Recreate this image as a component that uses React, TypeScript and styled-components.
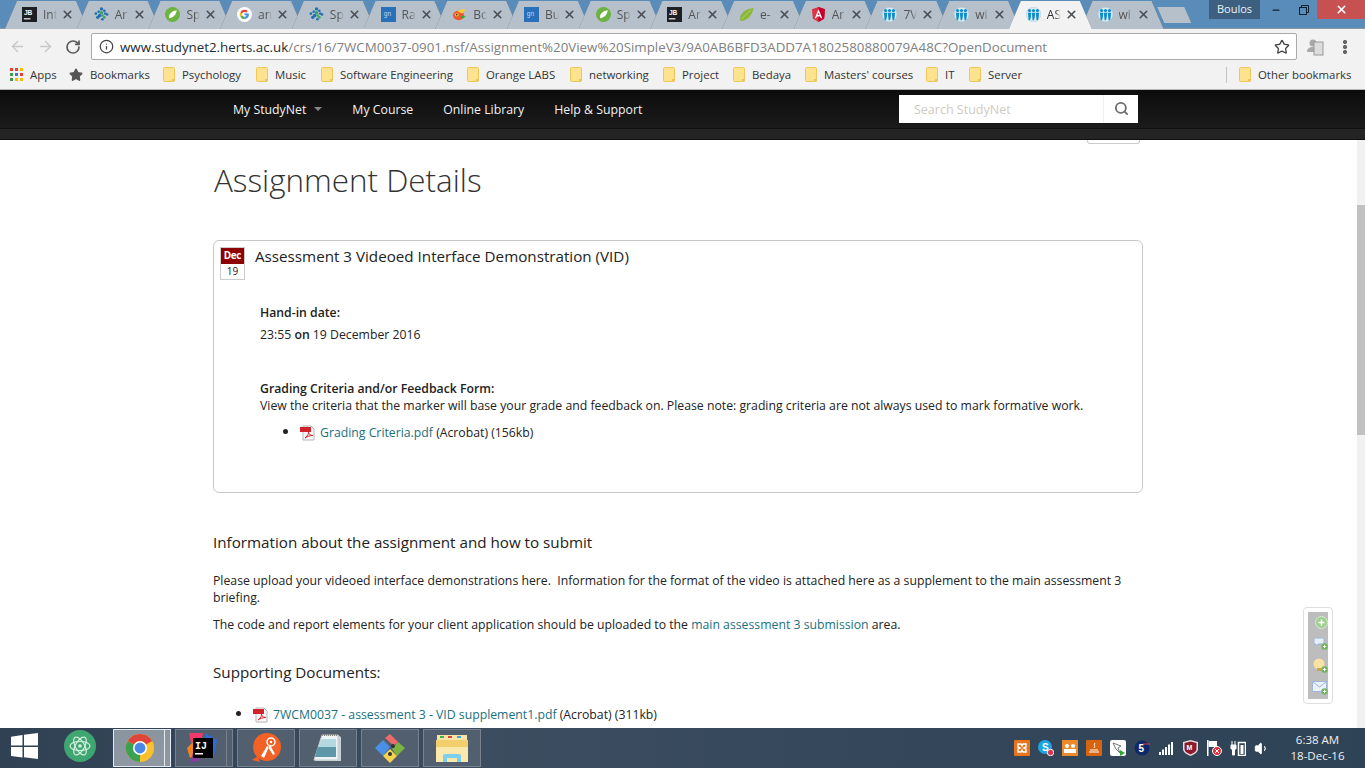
import React from 'react'
import styled, { createGlobalStyle } from 'styled-components'
import { ArrowLeft, ArrowRight, RotateCw, Info, Star, Search, X, Minus, Volume1 } from 'lucide-react'

const GlobalStyle = createGlobalStyle`
  html, body { margin: 0; padding: 0; height: 100%; overflow: hidden; background: #fff; }
  #root { height: 100%; }
  * { box-sizing: border-box; }
`

const Screen = styled.div`
  width: 1365px;
  height: 768px;
  display: flex;
  flex-direction: column;
  overflow: hidden;
  position: relative;
  font-family: 'Open Sans', 'Liberation Sans', sans-serif;
  color: #222;
`

/* ---------- browser chrome ---------- */

const TabStrip = styled.div`
  height: 29px;
  flex: none;
  background: #5a8cba;
  display: flex;
  align-items: flex-start;
  padding: 1px 0 0 5px;
  border-bottom: 1px solid #8b98a4;
`

const TabSlot = styled.div<{ $active?: boolean }>`
  width: 83px;
  height: 28px;
  flex: none;
  margin-right: -11.3px;
  position: relative;
  z-index: ${(p) => (p.$active ? 2 : 1)};
  filter: drop-shadow(0 0 0.6px #5d6670);
`

const TabFace = styled.div<{ $active?: boolean }>`
  width: 100%;
  height: 100%;
  background: ${(p) => (p.$active ? '#f2f2f2' : '#b5c0ca')};
  clip-path: polygon(0 100%, 12px 0, 71px 0, 83px 100%);
  display: flex;
  align-items: center;
  padding: 0 0 1px 17px;
`

const TabIcon = styled.svg`
  width: 15px;
  height: 15px;
  flex: none;
`

const TabTitle = styled.span<{ $active?: boolean }>`
  width: 14px;
  margin-left: 6px;
  overflow: hidden;
  white-space: nowrap;
  font-size: 12px;
  color: ${(p) => (p.$active ? '#333' : '#555')};
  -webkit-mask-image: linear-gradient(90deg, #000 60%, transparent);
  mask-image: linear-gradient(90deg, #000 60%, transparent);
`

const TabClose = styled(X)`
  width: 13px;
  height: 13px;
  margin-left: 4px;
  flex: none;
  color: #4a4f55;
`

const NewTab = styled.div`
  width: 34px;
  height: 16px;
  margin: 6px 0 0 5px;
  flex: none;
  background: #b5c0ca;
  clip-path: polygon(0 0, 27px 0, 34px 100%, 7px 100%);
`

const ProfileChip = styled.div`
  margin-left: auto;
  margin-top: -1px;
  width: 51px;
  height: 19px;
  background: #3d5f80;
  color: #eef2f5;
  font-size: 11px;
  text-align: center;
  line-height: 18px;
`

const WindowButton = styled.div<{ $close?: boolean; $wide?: number }>`
  width: ${(p) => p.$wide ?? 26}px;
  height: 19px;
  margin-top: -1px;
  display: flex;
  align-items: center;
  justify-content: center;
  color: ${(p) => (p.$close ? '#fff' : '#10202e')};
  background: ${(p) => (p.$close ? '#c75050' : 'transparent')};
`

const Toolbar = styled.div`
  height: 32px;
  flex: none;
  background: #f2f2f2;
  display: flex;
  align-items: center;
  padding: 3px 0 0 8px;
`

const NavButton = styled.div<{ $off?: boolean }>`
  width: 18px;
  height: 18px;
  margin-right: 10px;
  color: ${(p) => (p.$off ? '#c8c8c8' : '#5a5a5a')};
  display: flex;
  align-items: center;
  justify-content: center;
`

const Omnibox = styled.div`
  width: 1206px;
  height: 27px;
  margin-left: -1px;
  background: #fff;
  border: 1px solid #a9a9a9;
  border-radius: 2px;
  display: flex;
  align-items: center;
  padding: 0 6px 0 7px;
  font-size: 13.34px;
  white-space: nowrap;
`

const UrlHost = styled.span`
  margin-left: 6px;
  color: #1c2b33;
`

const UrlPath = styled.span`
  color: #808080;
`

const StarButton = styled(Star)`
  margin-left: auto;
  color: #444;
  flex: none;
`

const ExtensionIcon = styled.svg`
  width: 18px;
  height: 18px;
  margin-left: 9px;
  flex: none;
`

const MenuDots = styled.div`
  margin-left: 19px;
  width: 4px;
  height: 14px;
  background: radial-gradient(circle at 2px 2px, #666 2px, transparent 2.2px) 0 0 / 4px 5px repeat-y;
`

const BookmarkBar = styled.div`
  height: 29px;
  flex: none;
  background: #f2f2f2;
  border-bottom: 1px solid #b8b8b8;
  display: flex;
  align-items: center;
  padding: 0 0 1px 10px;
  font-size: 11.4px;
  color: #333;
`

const Bookmark = styled.div<{ $at: number }>`
  display: flex;
  align-items: center;
  gap: 7px;
  white-space: nowrap;
  flex: none;
  width: ${(p) => p.$at}px;
`

const BarDivider = styled.div`
  width: 1px;
  height: 16px;
  background: #c4c4c4;
  margin-right: 12px;
`

/* ---------- site header ---------- */

const SiteBar = styled.header`
  height: 50px;
  flex: none;
  background: #242424;
  border-bottom: 1px solid #111;
`

const SiteBarTop = styled.div`
  height: 39px;
  background: linear-gradient(#0c0c0c, #1b1b1b);
  display: flex;
  align-items: center;
  padding: 0 227px 0 233px;
  border-bottom: 1px solid #111;
`

const SiteLink = styled.a`
  color: #f2f2f2;
  font-size: 12.3px;
  font-weight: 500;
  margin-right: 30px;
  display: flex;
  align-items: center;
  white-space: nowrap;
`

const Caret = styled.span`
  width: 0;
  height: 0;
  margin-left: 8px;
  border-left: 4px solid transparent;
  border-right: 4px solid transparent;
  border-top: 4px solid #888;
`

const SearchBox = styled.div`
  margin-left: auto;
  margin-top: -1px;
  width: 239px;
  height: 28px;
  background: #fff;
  display: flex;
  align-items: center;
`

const SearchHint = styled.span`
  flex: 1;
  padding: 1px 0 0 15px;
  font-size: 12.5px;
  color: #cfcac5;
`

const SearchAddon = styled.div`
  width: 35px;
  height: 100%;
  border-left: 1px solid #f0f0f0;
  display: flex;
  align-items: center;
  justify-content: center;
  color: #6e6e6e;
`

/* ---------- page body ---------- */

const Viewport = styled.div`
  flex: 1;
  min-height: 0;
  display: flex;
  overflow: hidden;
  background: #fff;
`

const PageColumn = styled.main`
  flex: 1;
  min-width: 0;
  padding-left: 213px;
  position: relative;
  font-size: 12.25px;
  line-height: 17px;
`

const HangingTab = styled.div`
  position: absolute;
  top: 0;
  left: 1087px;
  width: 53px;
  height: 4px;
  border: 1px solid #ccc;
  border-top: none;
  border-radius: 0 0 3px 3px;
`

const PageTitle = styled.h1`
  margin: 0;
  padding-top: 18px;
  height: 100px;
  font-size: 31.4px;
  line-height: 44px;
  font-weight: 300;
  color: #333;
  padding-left: 1px;
`

const AssignmentCard = styled.section`
  width: 930px;
  height: 253px;
  border: 1px solid #c8c8c8;
  border-radius: 6px;
  padding: 6px 6px 0;
`

const CardHeader = styled.div`
  display: flex;
  align-items: flex-start;
  gap: 10px;
`

const DateBadge = styled.div`
  width: 25px;
  height: 33px;
  border: 1px solid #ccc;
  font-size: 10px;
  text-align: center;
  flex: none;
`

const BadgeMonth = styled.div`
  background: #8f0000;
  color: #fff;
  font-weight: 700;
  height: 16px;
  line-height: 15px;
  letter-spacing: -0.4px;
`

const BadgeDay = styled.div`
  line-height: 15px;
`

const CardTitle = styled.h2`
  margin: -1px 0 0;
  font-size: 15.2px;
  line-height: 20px;
  font-weight: 400;
`

const CardBody = styled.div`
  padding: 24px 0 0 40px;
`

const Strong = styled.div`
  font-weight: 600;
`

const DateLine = styled.div`
  margin-top: 5px;
  margin-bottom: 37px;
`

const Bold = styled.b`
  font-weight: 600;
`

const DocList = styled.ul<{ $gap: number }>`
  list-style: disc;
  margin: ${(p) => p.$gap}px 0 0;
  padding-left: 40px;

  li::marker {
    font-size: 14px;
  }
`

const DocLink = styled.a`
  color: #1a7080;
`

const PdfGlyph = styled.svg`
  width: 16px;
  height: 16px;
  vertical-align: -4px;
  margin-right: 4px;
`

const SectionTitle = styled.h3<{ $gap: number }>`
  margin: ${(p) => p.$gap}px 0 0;
  font-size: 15.2px;
  line-height: 20px;
  font-weight: 400;
`

const Paragraph = styled.p<{ $gap: number }>`
  margin: ${(p) => p.$gap}px 0 0;
  width: 930px;
`

const Scrollbar = styled.div`
  width: 8px;
  flex: none;
  background: #f1f1f1;
  padding-top: 65px;
`

const ScrollThumb = styled.div`
  height: 230px;
  background: #c1c1c1;
`

const FeedbackWidget = styled.div`
  position: absolute;
  top: 467px;
  left: 1303px;
  width: 30px;
  height: 97px;
  padding: 4px;
  background: #fff;
  border: 1px solid #ddd;
  border-radius: 4px;
`

const WidgetInner = styled.div`
  width: 100%;
  height: 100%;
  background: #bdbdbd;
  display: flex;
  flex-direction: column;
  align-items: flex-end;
  justify-content: space-around;
`

/* ---------- taskbar ---------- */

const Taskbar = styled.footer`
  height: 40px;
  flex: none;
  background: linear-gradient(90deg, #2f4153, #3c4d60 35%, #33465a 70%, #2f4357);
  display: flex;
  align-items: center;
  color: #fff;
`

const StartButton = styled.div`
  width: 64px;
  padding-left: 11px;
  flex: none;
`

const PinnedApp = styled.div`
  width: 49px;
  flex: none;
`

const TaskButton = styled.div<{ $active?: boolean; $w: number; $gap: number; $stack?: boolean }>`
  width: ${(p) => p.$w}px;
  height: 38px;
  margin-left: ${(p) => p.$gap}px;
  flex: none;
  position: relative;
  display: flex;
  align-items: center;
  justify-content: center;
  background: ${(p) => (p.$active ? 'linear-gradient(#8a95a0, #8f98a2)' : '#515f6f')};
  border: 1px solid ${(p) => (p.$active ? '#e6eaee' : '#76828f')};

  ${(p) =>
    p.$stack &&
    `&::after {
      content: '';
      position: absolute;
      top: -1px;
      bottom: -1px;
      right: -6px;
      width: 5px;
      border: 1px solid ${p.$active ? '#e6eaee' : '#76828f'};
      background: inherit;
    }`}
`

const TrayGroup = styled.div`
  margin-left: auto;
  display: flex;
  align-items: center;
  gap: 8px;
`

const TraySlot = styled.div`
  width: 16px;
  height: 16px;
  display: flex;
  align-items: center;
  justify-content: center;
`

const Clock = styled.div`
  width: 95px;
  flex: none;
  text-align: center;
  font-size: 11.5px;
  line-height: 16px;
  color: #eef1f4;
`

/* ---------- drawings ---------- */

const Favicon = ({ kind }: { kind: string }) => {
  switch (kind) {
    case 'jb':
      return (
        <TabIcon viewBox="0 0 16 16">
          <rect width="16" height="16" fill="#1c1f24" />
          <text x="2" y="8" fontSize="7" fontWeight="700" fill="#fff" fontFamily="'Liberation Sans', sans-serif">JB</text>
          <rect x="2" y="12" width="7" height="1.2" fill="#fff" />
        </TabIcon>
      )
    case 'dots':
      return (
        <TabIcon viewBox="0 0 16 16">
          {[[8, 2], [11, 4], [5, 5], [8, 6], [2, 7], [12, 7], [6, 9], [9, 9], [14, 8], [4, 11], [9, 13], [11, 11]].map(([x, y], i) => (
            <circle key={i} cx={x} cy={y} r={i % 3 === 0 ? 1.8 : 1.4} fill={i % 4 === 3 ? '#3da35d' : '#1f6fb5'} />
          ))}
        </TabIcon>
      )
    case 'spring':
      return (
        <TabIcon viewBox="0 0 16 16">
          <circle cx="8" cy="8" r="8" fill="#6db33f" />
          <path d="M12.5 3.500C12 8 9 11.500 4.500 12 3.500 8 6.500 4.500 12.500 3.500Z" fill="#fff" />
        </TabIcon>
      )
    case 'google':
      return (
        <TabIcon viewBox="0 0 16 16">
          <circle cx="8" cy="8" r="8" fill="#fff" />
          <path d="M12.5 6.800H8v2h2.500a2.700 2.700 0 0 1-2.500 1.700V13a5 5 0 0 0 4.500-6.200Z" fill="#4285f4" />
          <path d="M8 10.500A2.600 2.600 0 0 1 5.500 9L3.600 10.500A5 5 0 0 0 8 13Z" fill="#34a853" />
          <path d="M5.500 9a2.600 2.600 0 0 1 0-2L3.600 5.500a5 5 0 0 0 0 5Z" fill="#fbbc05" />
          <path d="M5.500 7A2.600 2.600 0 0 1 9.700 6L11.500 4.300A5 5 0 0 0 3.600 5.500Z" fill="#ea4335" />
        </TabIcon>
      )
    case 'gn':
      return (
        <TabIcon viewBox="0 0 16 16">
          <rect width="16" height="16" fill="#2a70b8" />
          <text x="3" y="10" fontSize="7" fill="#b9d4ee" fontFamily="'Liberation Sans', sans-serif">gn</text>
        </TabIcon>
      )
    case 'bower':
      return (
        <TabIcon viewBox="0 0 16 16">
          <ellipse cx="7" cy="9" rx="6" ry="5" fill="#ef5734" />
          <path d="M6 5c3-3 6-3 9-2-2 1-3 2-4 4Z" fill="#ffcc2f" />
          <path d="M9 9l6 1-5 3Z" fill="#2baf2b" />
          <circle cx="5" cy="8" r="2" fill="#ffcc2f" />
          <circle cx="5" cy="8" r="1" fill="#543729" />
        </TabIcon>
      )
    case 'leaf':
      return (
        <TabIcon viewBox="0 0 16 16">
          <path d="M15.500 1C14 9 9 14.500 1.500 15 -.5 8 6 2 15.500 1Z" fill="#8ab63a" />
          <path d="M3 13C6 9 9 6 13 3.500" stroke="#b7d66c" fill="none" />
        </TabIcon>
      )
    case 'angular':
      return (
        <TabIcon viewBox="0 0 16 16">
          <path d="M8 0 1 2.500l1 10L8 16l6-3.500 1-10Z" fill="#dd3345" />
          <path d="M8 0v16l6-3.500 1-10Z" fill="#c3002f" />
          <path d="M8 2.500 4 12h1.500l.8-2h3.400l.8 2H12ZM7 8.600l1-2.500 1 2.500Z" fill="#fff" />
        </TabIcon>
      )
    default:
      return (
        <TabIcon viewBox="0 0 16 16">
          <circle cx="8" cy="8" r="7.800" fill="#d9eef8" stroke="#a5c8d9" strokeWidth=".5" />
          {[3.800, 8, 12.200].map((x) => (
            <g key={x} fill="#128ccc">
              <circle cx={x} cy="3.800" r="1.700" />
              <path d={`M${x - 1.800} 6h3.600l-.5 5-.8 3h-1.500l-.3-3Z`} />
            </g>
          ))}
        </TabIcon>
      )
  }
}

const FolderIcon = () => (
  <svg width="12" height="16" viewBox="0 0 12 16">
    <rect x=".5" y=".5" width="11" height="14" rx="1" fill="#fde28f" stroke="#eec75a" />
    <rect x="9" y="12" width="2.500" height="2.500" fill="#eec75a" />
  </svg>
)

const AppsGrid = () => (
  <svg width="13" height="13" viewBox="0 0 13 13">
    {['#e34133', '#e34133', '#f9b900', '#3c9a4f', '#3b78e7', '#e34133', '#3c9a4f', '#f9b900', '#f9b900'].map((c, i) => (
      <rect key={i} x={(i % 3) * 5} y={Math.floor(i / 3) * 5} width="3" height="3" fill={c} />
    ))}
  </svg>
)

const PdfIcon = () => (
  <PdfGlyph viewBox="0 0 16 16">
    <path d="M3 1h8l3 3v11H3Z" fill="#fafafa" stroke="#b5b5b5" />
    <rect x="0" y="2" width="11" height="5" fill="#d2232a" />
    <path d="M5 13c3-2 4-5 3.500-7.500C8 8 9 10 13 10.500 10 10.500 7 11.500 5 13Z" fill="none" stroke="#d2232a" strokeWidth="1" />
  </PdfGlyph>
)

const ChromeLogo = () => (
  <svg width="30" height="30" viewBox="0 0 32 32">
    <circle cx="16" cy="16" r="15" fill="#fbc02d" />
    <path d="M16 16 3 8.500A15 15 0 0 0 16 31Z" fill="#3ba150" />
    <path d="M16 16 29 8.500A15 15 0 0 0 3 8.500Z" fill="#e0453a" />
    <circle cx="16" cy="16" r="7.500" fill="#fff" />
    <circle cx="16" cy="16" r="5.800" fill="#4a88e8" />
  </svg>
)

const AtomLogo = () => (
  <svg width="32" height="32" viewBox="0 0 32 32">
    <circle cx="16" cy="16" r="16" fill="#3fa672" />
    <g fill="none" stroke="#d6efe0" strokeWidth="1.200">
      <ellipse cx="16" cy="16" rx="10" ry="4.500" />
      <ellipse cx="16" cy="16" rx="10" ry="4.500" transform="rotate(60 16 16)" />
      <ellipse cx="16" cy="16" rx="10" ry="4.500" transform="rotate(120 16 16)" />
    </g>
    <circle cx="16" cy="16" r="1.800" fill="#d6efe0" />
  </svg>
)

const IntelliJLogo = () => (
  <svg width="30" height="32" viewBox="0 0 30 32">
    <path d="M2 1h14l-2 10H4Z" fill="#f0386b" />
    <path d="M18 1l12 7-3 17-8-4Z" fill="#2f6bdc" />
    <path d="M0 16l6-6 4 12-7 4Z" fill="#f58220" />
    <path d="M3 31l3-10 8 7Z" fill="#8a3fa0" />
    <rect x="6" y="6" width="20" height="20" fill="#000" />
    <text x="8" y="17" fontSize="10" fontWeight="700" fill="#fff" fontFamily="'Liberation Mono', monospace">IJ</text>
    <rect x="8" y="21" width="8" height="1.500" fill="#fff" />
  </svg>
)

const PostmanLogo = () => (
  <svg width="30" height="32" viewBox="0 0 30 32">
    <circle cx="16" cy="15" r="14" fill="#f26125" />
    <path d="M1 28l6-4 2 6Z" fill="#f26125" />
    <path d="M10 24l6-10 2 1-5 11Z M17 15l5 8 2-1-5-9Z" fill="#fff" />
    <circle cx="20" cy="10" r="4" fill="none" stroke="#fff" strokeWidth="1.500" />
    <circle cx="20" cy="10" r="1.200" fill="#fff" />
  </svg>
)

const NotepadLogo = () => (
  <svg width="32" height="30" viewBox="0 0 32 30">
    <path d="M10 2h16v25H2Z" fill="#eef3f4" stroke="#c4ccd0" />
    <path d="M10 6h14v8H6Z" fill="#b4d8df" />
    <path d="M5.500 14H24v10H3Z" fill="#5e97a8" />
    <path d="M10 2h16" stroke="#888" strokeDasharray="1 1" strokeWidth="2" />
    <path d="M26 2l3 2v24H4l-2-1h24Z" fill="#c8d0d4" />
  </svg>
)

const GitLogo = () => (
  <svg width="32" height="32" viewBox="0 0 32 32">
    <path d="M1 16l8-8 7 7-7 9Z" fill="#4a90e8" />
    <path d="M11 6l5-4 8 8-4 4Z" fill="#ee6a6a" />
    <path d="M18 17l6-7 7 6-8 8Z" fill="#7cb342" />
    <path d="M9 24l7-7 7 7-7 7Z" fill="#f5d34f" />
    <circle cx="19" cy="14" r="2" fill="#333" />
    <circle cx="16" cy="22" r="2" fill="#333" />
  </svg>
)

const ExplorerLogo = () => (
  <svg width="32" height="30" viewBox="0 0 32 30">
    <rect x="1" y="2" width="30" height="6" fill="#f7e5a8" />
    <rect x="4" y="3" width="4" height="2" fill="#47b04b" />
    <rect x="12" y="3" width="4" height="2" fill="#d8453a" />
    <rect x="21" y="3" width="4" height="2" fill="#4f9be0" />
    <path d="M0 7h32v22H0Z" fill="#f3cf6b" />
    <path d="M0 14h32v15H0Z" fill="#fbe9ac" />
    <path d="M7 29v-6a2 2 0 0 1 2-2h14a2 2 0 0 1 2 2v6h-4v-4H11v4Z" fill="#7cd0ee" />
  </svg>
)

const WindowsLogo = () => (
  <svg width="27" height="26" viewBox="0 0 27 26">
    <path d="M0 3.700 11.500 2v10.500H0ZM13 1.800 27 0v12.500H13ZM0 14h11.500v10.500L0 23ZM13 14h14v12l-14-1.800Z" fill="#fff" />
  </svg>
)

const TrayIcon = ({ i }: { i: number }) => {
  switch (i) {
    case 0:
      return (
        <svg width="16" height="16" viewBox="0 0 16 16">
          <rect width="16" height="16" rx="1" fill="#e8741d" />
          <path d="M4 4h3l1 2 1-2h3v3l-2 1 2 1v3H9L8 10l-1 2H4V9l2-1-2-1Z" fill="none" stroke="#fff" strokeWidth="1.400" />
        </svg>
      )
    case 1:
      return (
        <svg width="16" height="16" viewBox="0 0 16 16">
          <circle cx="7" cy="7" r="7" fill="#1da5e0" />
          <text x="4" y="11" fontSize="10" fontWeight="700" fill="#fff" fontFamily="'Liberation Sans', sans-serif">S</text>
          <circle cx="12.500" cy="12.500" r="3.200" fill="#d8334a" stroke="#fff" />
        </svg>
      )
    case 2:
      return (
        <svg width="16" height="16" viewBox="0 0 16 16">
          <rect width="16" height="16" fill="#ec8a2e" />
          <circle cx="5" cy="6" r="2" fill="#fff" />
          <circle cx="11" cy="6" r="2" fill="#fff" />
          <rect x="2" y="9" width="12" height="4" fill="#fff" />
        </svg>
      )
    case 3:
      return (
        <svg width="16" height="16" viewBox="0 0 16 16">
          <rect width="16" height="16" rx="1" fill="#d9640f" />
          <path d="M3 12h10M4 10h8M9 3c-2 2 1 3-1 5" stroke="#fff" fill="none" />
        </svg>
      )
    case 4:
      return (
        <svg width="16" height="16" viewBox="0 0 16 16">
          <rect width="16" height="16" rx="2" fill="#fff" />
          <path d="M3 3l8 3-3 2 2 5-4-4Z" fill="none" stroke="#777" />
          <path d="M10 10l5 3-5 3Z" fill="#2fa52f" />
        </svg>
      )
    case 5:
      return (
        <svg width="16" height="16" viewBox="0 0 16 16">
          <circle cx="8" cy="8" r="7.500" fill="#10286a" />
          <text x="4.500" y="12" fontSize="10" fontWeight="700" fill="#fff" fontFamily="'Liberation Sans', sans-serif">5</text>
          <path d="M9 4h7" stroke="#e23b3b" />
        </svg>
      )
    case 6:
      return (
        <svg width="15" height="14" viewBox="0 0 15 14">
          {[0, 1, 2, 3, 4].map((n) => (
            <rect key={n} x={n * 3} y={11 - n * 2.500} width="2" height={3 + n * 2.500} fill="#fff" />
          ))}
        </svg>
      )
    case 7:
      return (
        <svg width="15" height="16" viewBox="0 0 15 16">
          <path d="M7.500 0 15 2v7c0 3-3 5-7.500 7C3 14 0 12 0 9V2Z" fill="#e8dfdf" />
          <path d="M7.500 1.500 13.500 3v6c0 2.500-2.500 4-6 5.500-3.500-1.500-6-3-6-5.500V3Z" fill="#8a1c2e" />
          <text x="3.500" y="10" fontSize="7" fontWeight="700" fill="#fff" fontFamily="'Liberation Sans', sans-serif">M</text>
        </svg>
      )
    case 8:
      return (
        <svg width="16" height="16" viewBox="0 0 16 16">
          <rect x="1" y="0" width="1.500" height="16" fill="#fff" />
          <path d="M2.500 1H11v6H2.500Z" fill="#fff" />
          <circle cx="11" cy="11" r="4.500" fill="#e0333f" stroke="#fff" />
          <path d="M9 9l4 4M13 9l-4 4" stroke="#fff" />
        </svg>
      )
    case 9:
      return (
        <svg width="16" height="16" viewBox="0 0 16 16">
          <path d="M1 5h5v4H4.500v6h-2V9H1ZM2 1v4M5 1v4" stroke="#fff" fill="#fff" />
          <rect x="8.500" y="2.500" width="7" height="13" fill="none" stroke="#fff" strokeWidth="1.500" />
          <rect x="10.500" y="5" width="3" height="9" fill="#fff" />
        </svg>
      )
    default:
      return <Volume1 size={17} fill="#fff" strokeWidth={1.500} />
  }
}

const tabs = [
  ['jb', 'Int'], ['dots', 'Ar'], ['spring', 'Sp'], ['google', 'an'], ['dots', 'Sp'], ['gn', 'Ra'],
  ['bower', 'Bo'], ['gn', 'Bu'], ['spring', 'Sp'], ['jb', 'Ar'], ['leaf', 'e-'], ['angular', 'Ar'],
  ['herts', '7V'], ['herts', 'wi'], ['herts', 'AS'], ['herts', 'wi'],
]

const bookmarks: [string, number][] = [
  ['Psychology', 93], ['Music', 65], ['Software Engineering', 146], ['Orange LABS', 103],
  ['networking', 93], ['Project', 70], ['Bedaya', 72], ['Masters\u0027 courses', 121], ['IT', 43], ['Server', 257],
]

export default function App() {
  return (
    <Screen>
      <GlobalStyle />
      <TabStrip>
        {tabs.map(([icon, title], i) => (
          <TabSlot key={i} $active={i === 14}>
            <TabFace $active={i === 14}>
              <Favicon kind={icon} />
              <TabTitle $active={i === 14}>{title}</TabTitle>
              <TabClose strokeWidth={3} />
            </TabFace>
          </TabSlot>
        ))}
        <NewTab />
        <ProfileChip>Boulos</ProfileChip>
        <WindowButton $wide={31}><Minus size={10} strokeWidth={3} /></WindowButton>
        <WindowButton $wide={26}>
          <svg width="10" height="10" viewBox="0 0 10 10" fill="none" stroke="#10202e">
            <rect x=".5" y="2.500" width="7" height="7" />
            <path d="M2.500 2.500v-2h7v7h-2" />
          </svg>
        </WindowButton>
        <WindowButton $close $wide={48}><X size={13} strokeWidth={3} /></WindowButton>
      </TabStrip>

      <Toolbar>
        <NavButton $off><ArrowLeft size={17} /></NavButton>
        <NavButton $off><ArrowRight size={17} /></NavButton>
        <NavButton><RotateCw size={16} strokeWidth={2.500} /></NavButton>
        <Omnibox>
          <Info size={15} color="#444" />
          <UrlHost>www.studynet2.herts.ac.uk</UrlHost>
          <UrlPath>/crs/16/7WCM0037-0901.nsf/Assignment%20View%20SimpleV3/9A0AB6BFD3ADD7A1802580880079A48C?OpenDocument</UrlPath>
          <StarButton size={16} />
        </Omnibox>
        <ExtensionIcon viewBox="0 0 18 18">
          <circle cx="7" cy="5" r="3.500" fill="#a8a8a8" />
          <path d="M1 14c0-4 3-5 6-5s5 1 5 3v2Z" fill="#a8a8a8" />
          <rect x="8" y="4" width="9" height="13" fill="#ddd" stroke="#999" />
        </ExtensionIcon>
        <MenuDots />
      </Toolbar>

      <BookmarkBar>
        <Bookmark $at={59}><AppsGrid />Apps</Bookmark>
        <Bookmark $at={94}><Star size={14} fill="#555" color="#555" />Bookmarks</Bookmark>
        {bookmarks.map(([label, w]) => (
          <Bookmark key={label} $at={w}><FolderIcon />{label}</Bookmark>
        ))}
        <BarDivider />
        <Bookmark $at={120}><FolderIcon />Other bookmarks</Bookmark>
      </BookmarkBar>

      <SiteBar>
        <SiteBarTop>
          <SiteLink>My StudyNet<Caret /></SiteLink>
          <SiteLink>My Course</SiteLink>
          <SiteLink>Online Library</SiteLink>
          <SiteLink>Help &amp; Support</SiteLink>
          <SearchBox>
            <SearchHint>Search StudyNet</SearchHint>
            <SearchAddon><Search size={15} strokeWidth={3} /></SearchAddon>
          </SearchBox>
        </SiteBarTop>
      </SiteBar>

      <Viewport>
        <PageColumn>
          <HangingTab />
          <PageTitle>Assignment Details</PageTitle>
          <AssignmentCard>
            <CardHeader>
              <DateBadge>
                <BadgeMonth>Dec</BadgeMonth>
                <BadgeDay>19</BadgeDay>
              </DateBadge>
              <CardTitle>Assessment 3 Videoed Interface Demonstration (VID)</CardTitle>
            </CardHeader>
            <CardBody>
              <Strong>Hand-in date:</Strong>
              <DateLine>23:55 <Bold>on</Bold> 19 December 2016</DateLine>
              <Strong>Grading Criteria and/or Feedback Form:</Strong>
              <div>View the criteria that the marker will base your grade and feedback on. Please note: grading criteria are not always used to mark formative work.</div>
              <DocList $gap={9}>
                <li><PdfIcon /><DocLink>Grading Criteria.pdf</DocLink> (Acrobat) (156kb)</li>
              </DocList>
            </CardBody>
          </AssignmentCard>
          <SectionTitle $gap={39}>Information about the assignment and how to submit</SectionTitle>
          <Paragraph $gap={20}>Please upload your videoed interface demonstrations here.&nbsp; Information for the format of the video is attached here as a supplement to the main assessment 3 briefing.</Paragraph>
          <Paragraph $gap={10}>The code and report elements for your client application should be uploaded to the <DocLink>main assessment 3 submission</DocLink> area.</Paragraph>
          <SectionTitle $gap={29}>Supporting Documents:</SectionTitle>
          <DocList $gap={23}>
            <li><PdfIcon /><DocLink>7WCM0037 - assessment 3 - VID supplement1.pdf</DocLink> (Acrobat) (311kb)</li>
          </DocList>
          <FeedbackWidget>
            <WidgetInner>
              <svg width="13" height="13" viewBox="0 0 13 13">
                <circle cx="6.500" cy="6.500" r="6" fill="#9fd08f" stroke="#d8ecd0" />
                <path d="M6.500 3.500v6M3.500 6.500h6" stroke="#fff" strokeWidth="1.500" />
              </svg>
              <svg width="15" height="13" viewBox="0 0 15 13">
                <path d="M1 1h10v6H5L3 9V7H1Z" fill="#e4effa" stroke="#9db8d8" />
                <circle cx="11.500" cy="9.500" r="3.200" fill="#6fb35c" />
                <path d="M11.500 7.800v3.400M9.800 9.500h3.400" stroke="#fff" />
              </svg>
              <svg width="15" height="15" viewBox="0 0 15 15">
                <circle cx="6" cy="6" r="5.500" fill="#f9e3a2" />
                <rect x="4" y="10" width="4" height="3" fill="#c9a74f" />
                <circle cx="11.500" cy="11.500" r="3.200" fill="#6fb35c" />
                <path d="M11.500 9.800v3.400M9.800 11.500h3.400" stroke="#fff" />
              </svg>
              <svg width="16" height="14" viewBox="0 0 16 14">
                <rect x=".5" y=".5" width="14" height="10" fill="#eaf1fb" stroke="#9db8d8" />
                <path d="M1 1l6.500 5L14 1" fill="none" stroke="#9db8d8" />
                <circle cx="12.500" cy="10.500" r="3.200" fill="#6fb35c" />
                <path d="M12.500 8.800v3.400M10.800 10.500h3.400" stroke="#fff" />
              </svg>
            </WidgetInner>
          </FeedbackWidget>
        </PageColumn>
        <Scrollbar><ScrollThumb /></Scrollbar>
      </Viewport>

      <Taskbar>
        <StartButton><WindowsLogo /></StartButton>
        <PinnedApp><AtomLogo /></PinnedApp>
        <TaskButton $active $stack $w={53} $gap={0}><ChromeLogo /></TaskButton>
        <TaskButton $stack $w={53} $gap={9}><IntelliJLogo /></TaskButton>
        <TaskButton $w={58} $gap={9}><PostmanLogo /></TaskButton>
        <TaskButton $w={58} $gap={4}><NotepadLogo /></TaskButton>
        <TaskButton $w={58} $gap={4}><GitLogo /></TaskButton>
        <TaskButton $w={58} $gap={4}><ExplorerLogo /></TaskButton>
        <TrayGroup>
          {[0, 1, 2, 3, 4, 5, 6, 7, 8, 9, 10].map((n) => (
            <TraySlot key={n}><TrayIcon i={n} /></TraySlot>
          ))}
        </TrayGroup>
        <Clock>6:38 AM<br />18-Dec-16</Clock>
      </Taskbar>
    </Screen>
  )
}
